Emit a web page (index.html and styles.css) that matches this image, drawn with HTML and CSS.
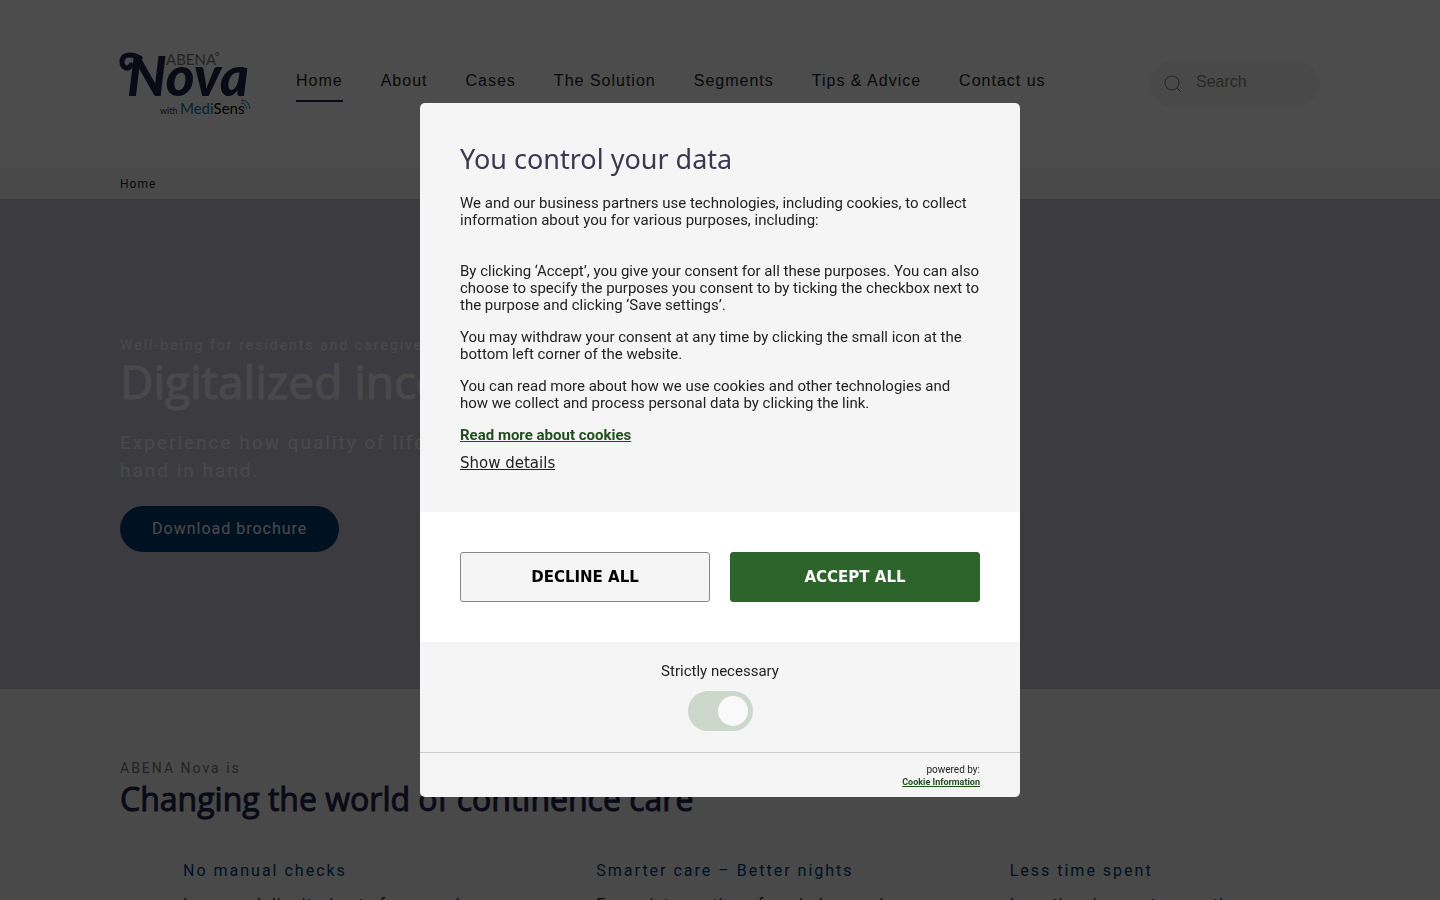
FILE: index.html
```html
<!DOCTYPE html>
<html lang="en">
<head>
<meta charset="utf-8">
<meta name="viewport" content="width=device-width, initial-scale=1">
<title>ABENA Nova</title>
<link rel="stylesheet" href="styles.css">
</head>
<body>
<header class="header">
  <div class="wrap header-row">
    <a class="logo" href="#" aria-label="ABENA Nova with MediSens">
      <svg width="132" height="66" viewBox="0 0 132 66">
        <path class="logo-swash" d="M11 14C8 20 2 16 2 11C2 3 11 2 20 7"/>
        <text class="logo-abena" x="46" y="14">ABENA</text>
        <circle class="logo-mark" cx="97" cy="3" r="1.5"/>
        <text class="logo-nova" x="7" y="45">Nova</text>
        <text class="logo-with" x="40" y="63">with</text>
        <text class="logo-medi" x="60" y="63">Medi<tspan class="logo-sens">Sens</tspan></text>
        <path class="logo-waves" d="M121 49q8 0 9 9M121 52q5 0 6 6M121 55q3 0 3 3"/>
      </svg>
    </a>
    <nav class="nav">
      <a class="nav-link active" href="#">Home</a>
      <a class="nav-link" href="#">About</a>
      <a class="nav-link" href="#">Cases</a>
      <a class="nav-link" href="#">The Solution</a>
      <a class="nav-link" href="#">Segments</a>
      <a class="nav-link" href="#">Tips &amp; Advice</a>
      <a class="nav-link" href="#">Contact us</a>
    </nav>
    <label class="search">
      <svg width="20" height="20" viewBox="0 0 20 20"><circle cx="9" cy="9" r="7"/><path d="M14 14l4 4"/></svg>
      <input class="search-input" type="search" placeholder="Search" aria-label="Search">
    </label>
  </div>
</header>
<div class="crumbs"><div class="wrap"><a class="crumb" href="#">Home</a></div></div>
<main>
  <section class="hero">
    <div class="wrap">
      <p class="hero-kicker">Well-being for residents and caregivers</p>
      <h1 class="hero-title">Digitalized incontinence care</h1>
      <p class="hero-text">Experience how quality of life and technology go<br>hand in hand.</p>
      <a class="hero-button" href="#">Download brochure</a>
    </div>
  </section>
  <section class="intro">
    <div class="wrap">
      <p class="intro-kicker">ABENA Nova is</p>
      <h2 class="intro-title">Changing the world of continence care</h2>
      <div class="benefits">
        <article class="benefit"><h3 class="benefit-title">No manual checks</h3><p class="benefit-text">Increased dignity, best of care and</p></article>
        <article class="benefit"><h3 class="benefit-title">Smarter care – Better nights</h3><p class="benefit-text">Fewer interruptions for whole rounds</p></article>
        <article class="benefit"><h3 class="benefit-title">Less time spent</h3><p class="benefit-text">Less time is spent on routine</p></article>
      </div>
    </div>
  </section>
</main>
<div class="overlay">
  <div class="dialog" role="dialog" aria-modal="true" aria-labelledby="dialog-title">
    <div class="dialog-body">
      <h2 class="dialog-title" id="dialog-title">You control your data</h2>
      <p class="dialog-text lead">We and our business partners use technologies, including cookies, to collect information about you for various purposes, including:</p>
      <p class="dialog-text">By clicking ‘Accept’, you give your consent for all these purposes. You can also choose to specify the purposes you consent to by ticking the checkbox next to the purpose and clicking ‘Save settings’.</p>
      <p class="dialog-text">You may withdraw your consent at any time by clicking the small icon at the bottom left corner of the website.</p>
      <p class="dialog-text">You can read more about how we use cookies and other technologies and how we collect and process personal data by clicking the link.</p>
      <a class="read-more" href="#">Read more about cookies</a>
      <button class="details" type="button">Show details</button>
    </div>
    <div class="dialog-actions">
      <button class="action decline" type="button">DECLINE ALL</button>
      <button class="action accept" type="button">ACCEPT ALL</button>
    </div>
    <div class="consent">
      <label class="consent-label" for="necessary">Strictly necessary</label>
      <input class="toggle" id="necessary" type="checkbox" checked disabled>
    </div>
    <div class="powered">
      <span>powered by:</span>
      <a class="powered-link" href="#">Cookie Information</a>
    </div>
  </div>
</div>
</body>
</html>
```

FILE: styles.css
```css
* { box-sizing: border-box; }
html, body { height: 100%; }
body {
  margin: 0;
  overflow: hidden;
  background: #f5f5f5;
  color: #1c1c1c;
  font-family: Roboto, "Liberation Sans", sans-serif;
}
h1, h2, h3, p { margin: 0; font-weight: 400; }
a { color: inherit; text-decoration: none; }
button, input { font: inherit; }

.wrap { max-width: 1200px; margin: 0 auto; }

/* Header */
.header { background: #fff; }
.header-row { display: flex; align-items: center; height: 168px; }
.logo { display: flex; width: 136px; margin-right: 40px; }
.logo svg { overflow: visible; }
.logo text { font-family: Lato, sans-serif; }
.logo-swash { fill: none; stroke: #23244f; stroke-width: 5; stroke-linecap: round; }
.logo .logo-abena { font-size: 15px; fill: #777; }
.logo-mark { fill: none; stroke: #777; }
.logo .logo-nova { font-size: 55px; font-weight: 900; font-style: italic; fill: #23244f; }
.logo .logo-with { font-size: 9px; fill: #23244f; }
.logo .logo-medi { font-size: 15px; fill: #0a78a8; }
.logo .logo-sens { fill: #000; }
.logo-waves { fill: none; stroke: #0a78a8; stroke-width: 1; }
.nav { display: flex; gap: 38px; flex: 1; padding-bottom: 6px; }
.nav-link {
  padding: 10px 0 8px;
  border-bottom: 2px solid transparent;
  font: 16px/22px "Liberation Sans", sans-serif;
  letter-spacing: 1px;
  white-space: nowrap;
}
.nav-link.active { border-color: #23244f; }
.search {
  display: flex;
  align-items: center;
  gap: 13px;
  width: 170px;
  height: 46px;
  padding: 0 13px;
  border-radius: 23px;
  background: #f5f5f5;
}
.search svg { flex: none; fill: none; stroke: #777; stroke-width: 1; }
.search-input {
  min-width: 0;
  width: 100%;
  padding: 0 0 4px;
  border: 0;
  background: none;
  font: 16px "Liberation Sans", sans-serif;
}
.search-input::placeholder { color: #888; }
.crumbs { padding: 8px 0 7px; font-size: 12px; line-height: 16px; letter-spacing: 1px; }
.crumb { display: block; }

/* Hero */
.hero { padding: 136px 0 137px; background: #c8cad8; color: #f5f5f5; }
.hero-kicker { font-size: 14px; line-height: 20px; letter-spacing: 2px; }
.hero-title { font: 46px/52px "Open Sans", sans-serif; -webkit-text-stroke: 1px currentColor; }
.hero-text { margin: 22px 0 21px; font-size: 19px; line-height: 28px; letter-spacing: 2px; }
.hero-button {
  display: inline-block;
  padding: 11px 32px;
  border-radius: 23px;
  background: #003a70;
  font-size: 16px;
  line-height: 24px;
  letter-spacing: 1px;
}

/* Intro */
.intro { padding-top: 69px; }
.intro-kicker { color: #777; font-size: 14px; line-height: 20px; letter-spacing: 2px; }
.intro-title { color: #23244f; font: 32px/42px "Open Sans", sans-serif; -webkit-text-stroke: 1px currentColor; }
.benefits { display: grid; grid-template-columns: repeat(3, 1fr); gap: 40px; margin-top: 39px; }
.benefit { padding-left: 63px; letter-spacing: 2px; white-space: nowrap; }
.benefit-title { color: #003a70; font-size: 16px; line-height: 24px; }
.benefit-text { margin-top: 10px; font-size: 16px; line-height: 24px; letter-spacing: 1px; }

/* Consent dialog */
.overlay {
  position: fixed;
  inset: 0;
  display: flex;
  align-items: center;
  justify-content: center;
  background: rgba(0, 0, 0, 0.7);
}
.dialog {
  width: 600px;
  max-width: 100%;
  overflow: hidden;
  border-radius: 5px;
  background: #f5f5f5;
  color: #222;
  font-size: 15px;
  line-height: 17px;
}
.dialog-body { display: flex; flex-direction: column; align-items: flex-start; padding: 40px; }
.dialog-title { margin-bottom: 20px; color: #3b3850; font: 27px/32px "Noto Sans", sans-serif; }
.dialog-text { margin-bottom: 15px; }
.dialog-text.lead { margin-bottom: 34px; }
.read-more { color: #224d1f; font-weight: 700; text-decoration: underline; }
.details {
  margin-top: 10px;
  padding: 0;
  border: 0;
  background: none;
  color: #222;
  font: 15px/18px "DejaVu Sans", sans-serif;
  text-decoration: underline;
}
.dialog-actions { display: flex; gap: 20px; padding: 40px; background: #fff; }
.action {
  flex: 1;
  height: 50px;
  border: 1px solid #2c642c;
  border-radius: 3px;
  font: 700 15px "DejaVu Sans", sans-serif;
}
.decline { border-color: #888; background: #f5f5f5; color: #000; }
.accept { background: #2c642c; color: #fff; }
.consent { display: flex; flex-direction: column; align-items: center; gap: 11px; padding: 21px 0; }
.toggle {
  display: flex;
  align-items: center;
  justify-content: flex-end;
  appearance: none;
  width: 65px;
  height: 40px;
  margin: 0;
  padding: 5px;
  border-radius: 20px;
  background: #cbd8cb;
}
.toggle::before { content: ""; width: 30px; height: 30px; border-radius: 50%; background: #f9f9f9; }
.powered {
  display: flex;
  flex-direction: column;
  align-items: flex-end;
  padding: 10px 40px 8px;
  border-top: 1px solid #ccc;
  font-size: 10px;
  line-height: 13px;
}
.powered-link { color: #224d1f; font-size: 9px; font-weight: 700; text-decoration: underline; }
```
